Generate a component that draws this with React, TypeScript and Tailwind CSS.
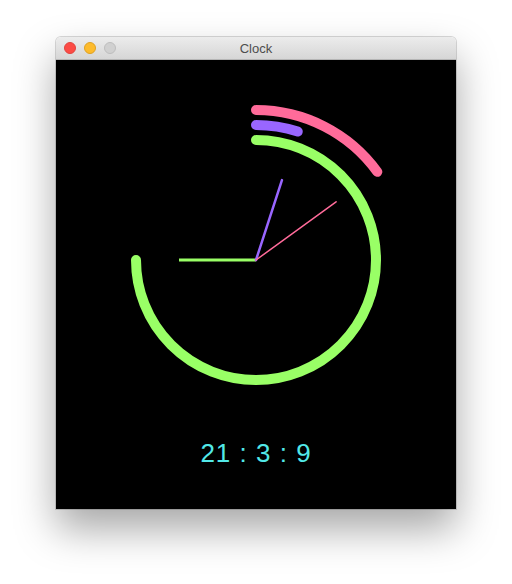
const CX = 200
const CY = 200

function arcPath(r: number, deg: number) {
  const a = (deg * Math.PI) / 180
  const x = CX + r * Math.sin(a)
  const y = CY - r * Math.cos(a)
  const large = deg > 180 ? 1 : 0
  return `M ${CX} ${CY - r} A ${r} ${r} 0 ${large} 1 ${x.toFixed(2)} ${y.toFixed(2)}`
}

function hand(len: number, deg: number) {
  const a = (deg * Math.PI) / 180
  return { x2: CX + len * Math.sin(a), y2: CY - len * Math.cos(a) }
}

export default function App() {
  const h = 21
  const m = 3
  const s = 9
  const hourDeg = ((h % 12) / 12) * 360
  const minDeg = (m / 60) * 360
  const secDeg = (s / 60) * 360

  return (
    <div className="w-[512px] h-[584px] bg-white pt-[37px]">
      <div className="mx-auto w-[400px] h-[472px] rounded-t-[5px] overflow-hidden flex flex-col shadow-[0_20px_40px_rgba(0,0,0,0.35),0_0_0_1px_rgba(0,0,0,0.15)]">
        <div className="relative h-[23px] flex items-center justify-center bg-gradient-to-b from-[#ececec] to-[#d6d6d6] border-b border-[#b5b5b5]">
          <div className="absolute left-[8px] top-[5px] flex gap-[8px]">
            <div className="w-[12px] h-[12px] rounded-full bg-[#fc4b45] border border-[#e0443e]" />
            <div className="w-[12px] h-[12px] rounded-full bg-[#fdbb2c] border border-[#dea123]" />
            <div className="w-[12px] h-[12px] rounded-full bg-[#d0d0d0] border border-[#bdbdbd]" />
          </div>
          <span className="pt-[2px] text-[13px] text-[#4d4d4d] font-['Liberation_Sans',sans-serif]">Clock</span>
        </div>
        <div className="flex-1 bg-black flex flex-col items-center">
          <svg width="400" height="360" viewBox="0 0 400 360" className="block">
            <g fill="none" strokeLinecap="round">
              <path d={arcPath(150, secDeg)} stroke="#ff6b9a" strokeWidth="10" />
              <path d={arcPath(135, minDeg)} stroke="#9966ff" strokeWidth="10" />
              <path d={arcPath(120, hourDeg)} stroke="#99ff66" strokeWidth="10" />
              <line x1={CX} y1={CY} {...hand(77, hourDeg)} stroke="#99ff66" strokeWidth="3" strokeLinecap="butt" />
              <line x1={CX} y1={CY} {...hand(84, minDeg)} stroke="#9966ff" strokeWidth="2.5" />
              <line x1={CX} y1={CY} {...hand(99, secDeg)} stroke="#ff6b9a" strokeWidth="1.5" />
            </g>
          </svg>
          <div className="mt-[20px] text-[26px] leading-none text-[#52e8e8] tracking-[1px] font-['Liberation_Sans',sans-serif]">
            {h} : {m} : {s}
          </div>
        </div>
      </div>
    </div>
  )
}
